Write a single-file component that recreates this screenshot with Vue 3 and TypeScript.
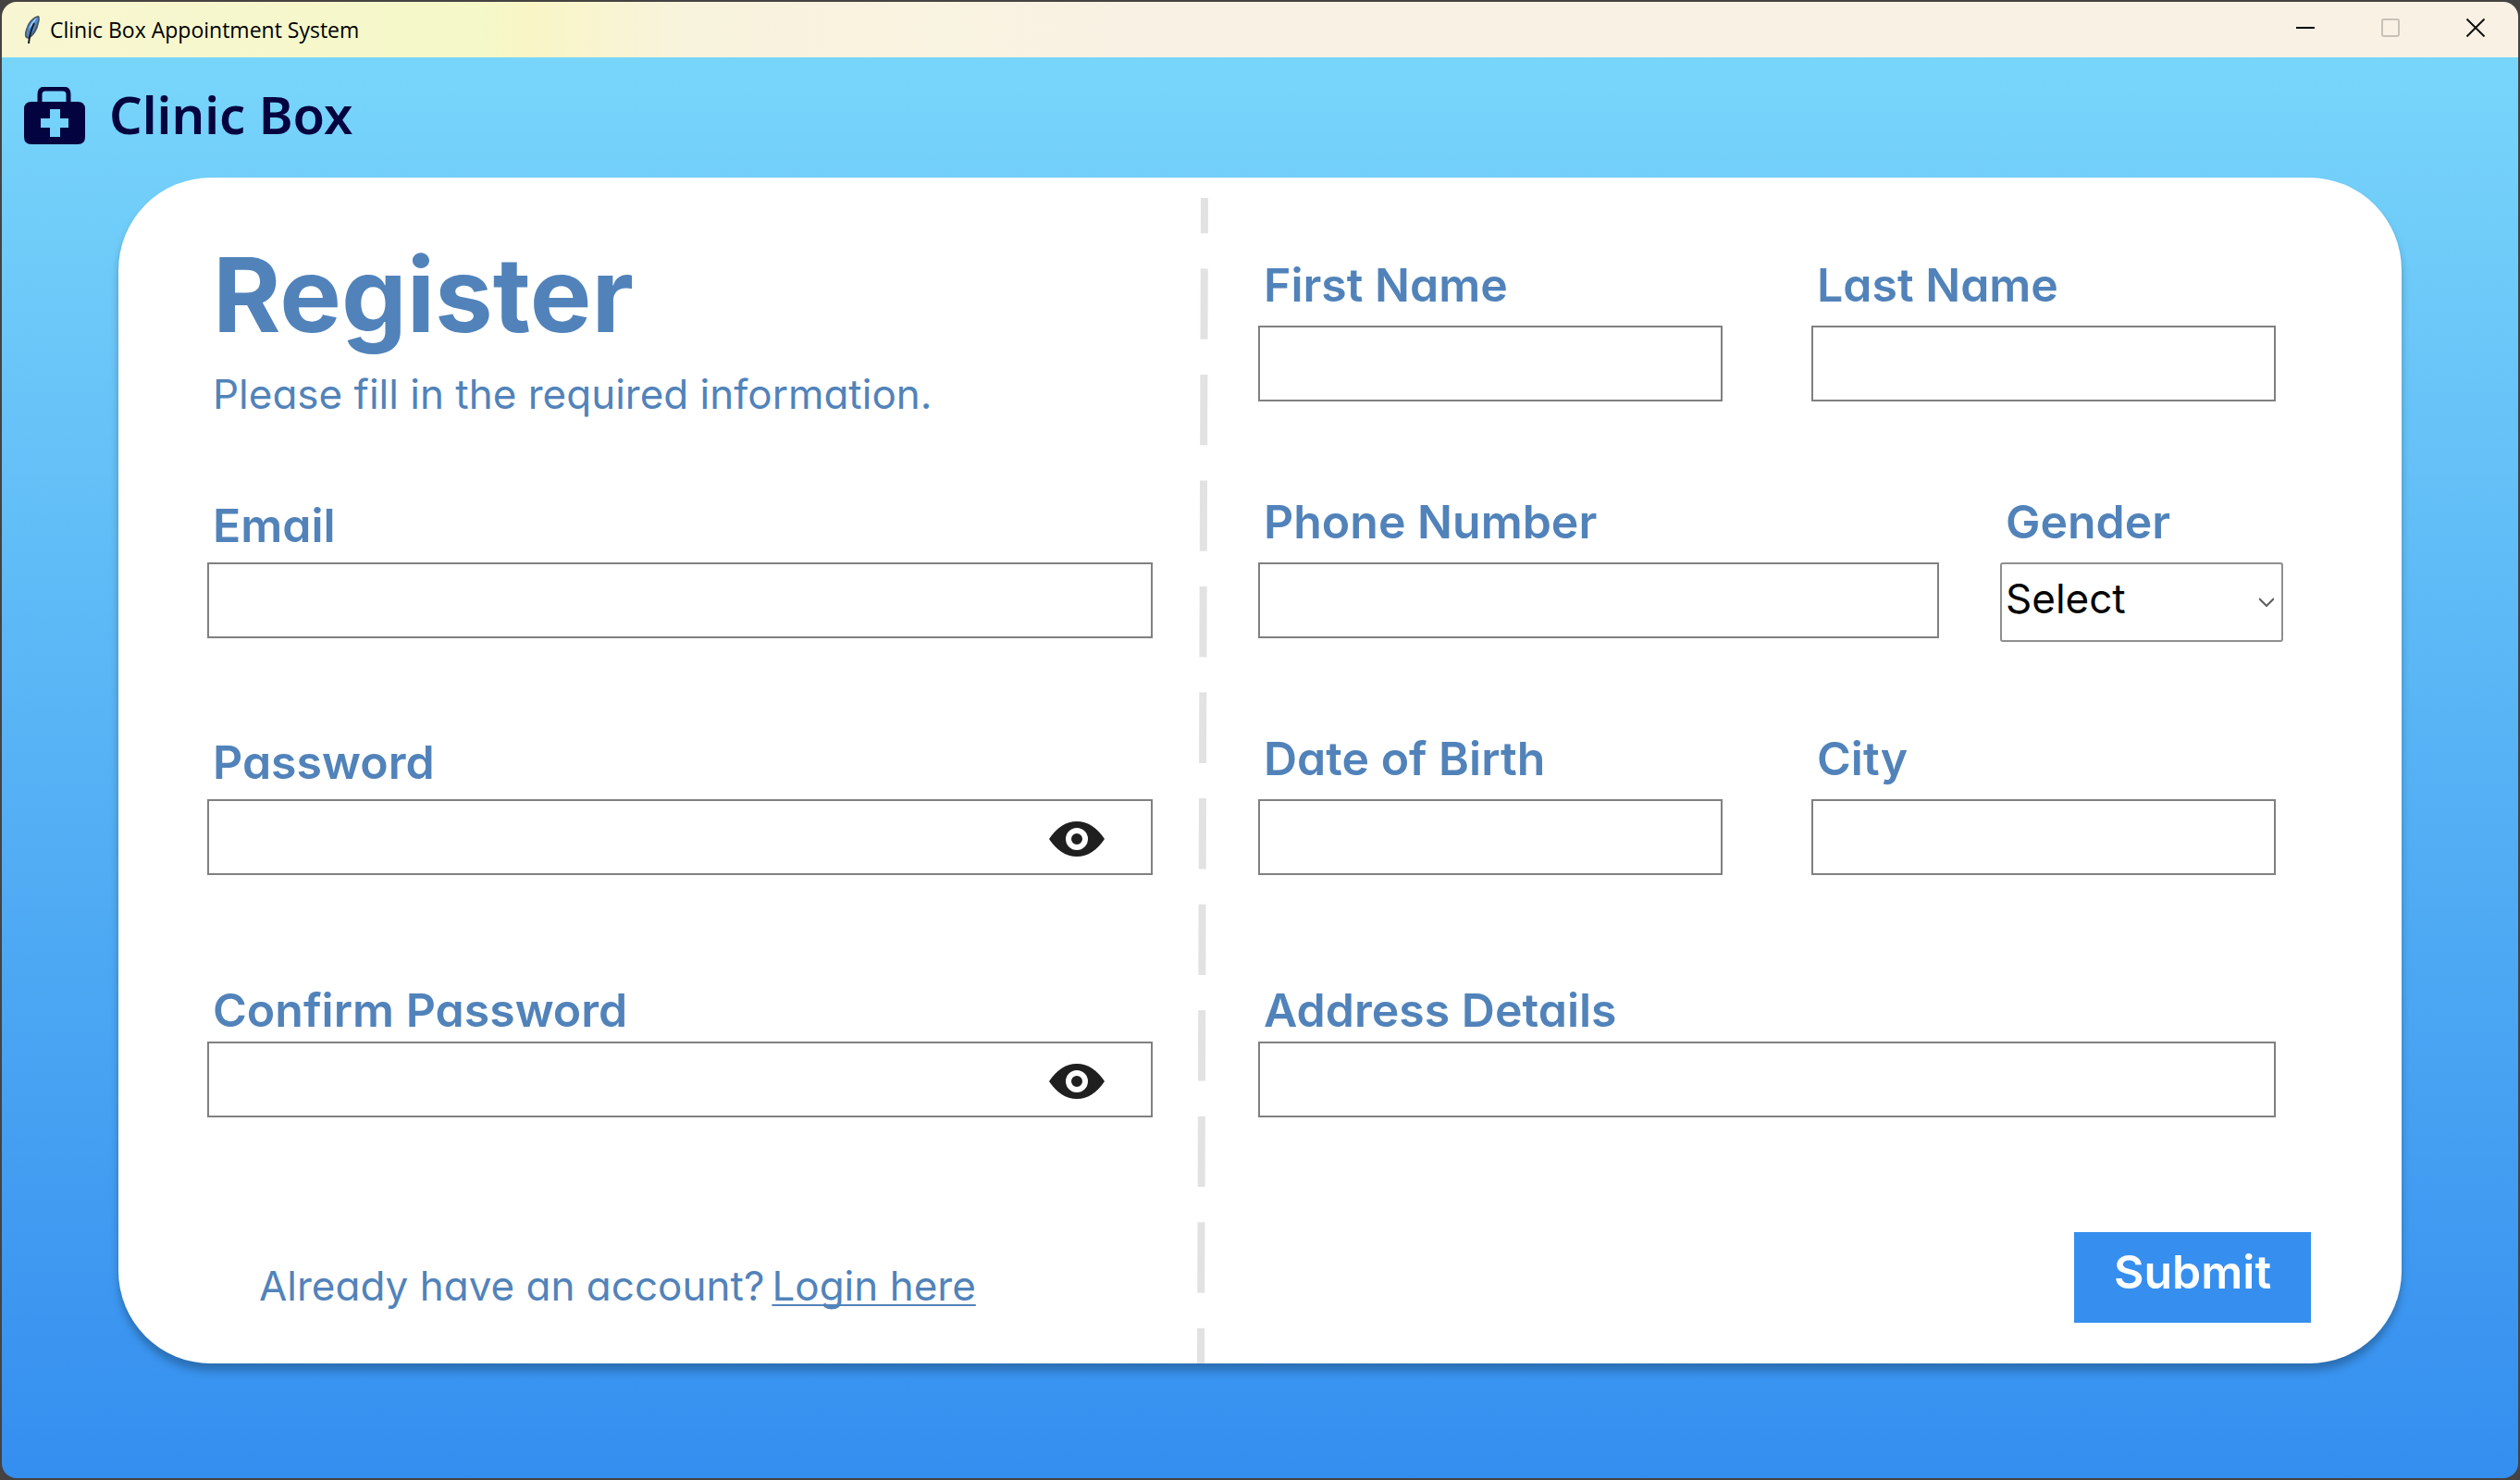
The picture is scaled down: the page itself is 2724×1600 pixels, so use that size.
<script setup lang="ts">
import { reactive, ref } from 'vue'

const form = reactive({
  email: '',
  password: '',
  confirm: '',
  firstName: '',
  lastName: '',
  phone: '',
  gender: '',
  birth: '',
  city: '',
  address: '',
})

const showPassword = ref(false)
const showConfirm = ref(false)
const genders: string[] = ['Male', 'Female', 'Other']
</script>

<template>
  <div class="desktop">
    <div class="window">
      <header class="titlebar">
        <svg class="feather" viewBox="0 0 20 32" aria-hidden="true">
          <path d="M17 1C12 1 6 7 4 13c-2 5-3 9-1 12l3 1c4-2 8-7 10-13 1-4 3-9 1-12z" fill="#4d5a63" />
          <path d="M16 3C11 4 7 9 5 14c-1 4-2 7-1 9l2 1c4-3 6-7 8-12 1-3 3-7 2-9z" fill="#4b8bd6" />
          <path d="M15 3c-4 2-7 7-9 13l4-5z" fill="#a5d0f6" />
          <path d="M12 9C9 15 7 20 6 31" fill="none" stroke="#1c1f22" stroke-width="2" />
        </svg>
        <span class="title">Clinic Box Appointment System</span>
        <div class="controls">
          <button type="button" aria-label="Minimize">
            <svg viewBox="0 0 20 20"><path d="M0 10h20" stroke="#000" stroke-width="2" /></svg>
          </button>
          <button type="button" aria-label="Maximize" disabled>
            <svg viewBox="0 0 20 20">
              <rect x="1" y="1" width="18" height="18" rx="2" fill="none" stroke="#c6c2b8" stroke-width="2" />
            </svg>
          </button>
          <button type="button" aria-label="Close">
            <svg viewBox="0 0 20 20"><path d="M0.5 0.5l19 19M19.500 0.5l-19 19" stroke="#111" stroke-width="2" /></svg>
          </button>
        </div>
      </header>

      <main class="page">
        <div class="brand">
          <svg class="bag" viewBox="0 0 66 62" aria-hidden="true">
            <path d="M17 18V8q0-6 6-6h19q6 0 6 6v10" fill="none" stroke="#03033f" stroke-width="5" />
            <path
              fill="#03033f"
              fill-rule="evenodd"
              d="M8 16h50q8 0 8 8v30q0 8-8 8H8q-8 0-8-8V24q0-8 8-8zM28 24v10H18v10h10v10h11V44h9V34h-9V24z"
            />
          </svg>
          <span class="brand-name">Clinic Box</span>
        </div>

        <form class="card" @submit.prevent>
          <section class="account">
            <h1>Register</h1>
            <p class="intro">Please fill in the required information.</p>

            <div class="field snug email">
              <label for="email">Email</label>
              <input id="email" v-model="form.email" type="email" />
            </div>

            <div class="field snug password">
              <label for="password">Password</label>
              <div class="secret">
                <input id="password" v-model="form.password" :type="showPassword ? 'text' : 'password'" />
                <button type="button" class="eye" aria-label="Show password" @click="showPassword = !showPassword">
                  <svg viewBox="0 0 60 38">
                    <path d="M0 19C8 7 18 0 30 0s22 7 30 19C52 31 42 38 30 38S8 31 0 19z" fill="#1f1f1f" />
                    <circle cx="30" cy="19" r="9" fill="#1f1f1f" stroke="#fff" stroke-width="6" />
                  </svg>
                </button>
              </div>
            </div>

            <div class="field tight">
              <label for="confirm">Confirm Password</label>
              <div class="secret">
                <input id="confirm" v-model="form.confirm" :type="showConfirm ? 'text' : 'password'" />
                <button type="button" class="eye" aria-label="Show password" @click="showConfirm = !showConfirm">
                  <svg viewBox="0 0 60 38">
                    <path d="M0 19C8 7 18 0 30 0s22 7 30 19C52 31 42 38 30 38S8 31 0 19z" fill="#1f1f1f" />
                    <circle cx="30" cy="19" r="9" fill="#1f1f1f" stroke="#fff" stroke-width="6" />
                  </svg>
                </button>
              </div>
            </div>

            <p class="login"><span>Already have an account?</span><a href="#login">Login here</a></p>
          </section>

          <div class="divider" aria-hidden="true">
            <svg width="16" height="100%">
              <line
                x1="10" y1="0" x2="6" y2="100%" pathLength="33"
                stroke="#e2e2e2" stroke-width="8" stroke-dasharray="2 1" stroke-dashoffset="1"
              />
            </svg>
          </div>

          <section class="details">
            <div class="row halves">
              <div class="field">
                <label for="first">First Name</label>
                <input id="first" v-model="form.firstName" type="text" />
              </div>
              <div class="field">
                <label for="last">Last Name</label>
                <input id="last" v-model="form.lastName" type="text" />
              </div>
            </div>

            <div class="row contact">
              <div class="field">
                <label for="phone">Phone Number</label>
                <input id="phone" v-model="form.phone" type="tel" />
              </div>
              <div class="field">
                <label for="gender">Gender</label>
                <div class="picker">
                  <select id="gender" v-model="form.gender">
                    <option value="">Select</option>
                    <option v-for="g in genders" :key="g" :value="g">{{ g }}</option>
                  </select>
                  <svg class="chevron" viewBox="0 0 16 10" aria-hidden="true">
                    <path d="M0 1l8 8 8-8" fill="none" stroke="#5c5c5c" stroke-width="2" />
                  </svg>
                </div>
              </div>
            </div>

            <div class="row halves birth">
              <div class="field">
                <label for="birth">Date of Birth</label>
                <input id="birth" v-model="form.birth" type="text" />
              </div>
              <div class="field">
                <label for="city">City</label>
                <input id="city" v-model="form.city" type="text" />
              </div>
            </div>

            <div class="row address">
              <div class="field tight">
                <label for="address">Address Details</label>
                <input id="address" v-model="form.address" type="text" />
              </div>
            </div>

            <button type="submit" class="submit">Submit</button>
          </section>
        </form>
      </main>
    </div>
  </div>
</template>

<style>
body {
  margin: 0;
}
</style>

<style scoped>
* {
  box-sizing: border-box;
}

.desktop {
  display: flex;
  min-height: 100vh;
  padding: 2px;
  background: #454242;
  font-family: Inter, 'Open Sans', sans-serif;
  /* single-storey "a" */
  font-feature-settings: 'cv11';
  color: #5183ba;
}

.window {
  display: flex;
  flex: 1;
  flex-direction: column;
  overflow: hidden;
  border-radius: 16px;
}

.titlebar {
  display: flex;
  align-items: center;
  height: 60px;
  padding: 0 0 0 23px;
  background: linear-gradient(90deg, #f8f6d2 0, #f5f8c9 16%, #f5f8c8 19%, #f9f5c6 21%, #f8f3dc 27%, #f9f2e4 45%);
}

.feather {
  width: 20px;
  height: 32px;
}

.title {
  flex: 1;
  margin-left: 9px;
  font: 23px/32px 'Open Sans', 'Noto Sans', sans-serif;
  color: #000;
}

.controls {
  display: flex;
  align-self: flex-start;
}

.controls button {
  display: flex;
  align-items: center;
  justify-content: center;
  width: 92px;
  height: 56px;
  padding: 0;
  border: 0;
  background: none;
}

.controls svg {
  width: 20px;
  height: 20px;
}

.page {
  flex: 1;
  padding: 0 126px 124px;
  background: linear-gradient(#78d5fa, #348eef);
}

.brand {
  display: flex;
  align-items: center;
  gap: 26px;
  height: 130px;
  margin-left: -102px;
  padding-bottom: 4px;
}

.bag {
  width: 66px;
  height: 62px;
}

.brand-name {
  padding-bottom: 4px;
  font: 600 56px/72px 'Noto Sans', 'Open Sans', sans-serif;
  color: #03033f;
}

.card {
  display: grid;
  grid-template-columns: 1022fr 114px 1138fr;
  padding: 0 98px 0 96px;
  border-radius: 100px;
  background: #fff;
  box-shadow: 0 8px 8px rgba(0, 0, 0, 0.25);
}

.account {
  padding-top: 66px;
}

h1 {
  margin: 0 6px 20px;
  font-size: 112px;
  font-weight: 700;
  line-height: 120px;
}

.intro {
  margin: 0 6px 86px;
  font-size: 44px;
  line-height: 56px;
}

.field {
  display: flex;
  flex: 1;
  flex-direction: column;
  gap: 16px;
}

.field.snug {
  gap: 12px;
}

.field.tight {
  gap: 6px;
}

.email {
  margin-bottom: 106px;
}

.password {
  margin-bottom: 118px;
}

label {
  padding-left: 6px;
  font-size: 50px;
  font-weight: 600;
  line-height: 56px;
  white-space: nowrap;
}

input {
  width: 100%;
  height: 82px;
  padding: 0 8px;
  border: 2px solid #808080;
  border-radius: 0;
  background: #fff;
  font: inherit;
  font-size: 44px;
  color: #000;
}

.secret,
.picker {
  position: relative;
}

.secret input {
  display: block;
  padding-right: 120px;
}

.eye {
  position: absolute;
  top: 24px;
  right: 52px;
  width: 60px;
  height: 38px;
  padding: 0;
  border: 0;
  background: none;
}

.eye svg {
  display: block;
}

.login {
  display: flex;
  gap: 8px;
  margin: 154px 0 0 56px;
  font-size: 44px;
  line-height: 56px;
  white-space: nowrap;
}

.login a {
  color: inherit;
  text-decoration-thickness: 2px;
  text-decoration-skip-ink: none;
  text-underline-offset: 4px;
}

.divider {
  display: flex;
  padding: 22px 0 0 46px;
}

.details {
  display: flex;
  flex-direction: column;
  padding: 88px 0 44px;
}

.row {
  display: flex;
  margin: 0 38px 102px 0;
}

.halves {
  gap: 96px;
}

.contact {
  display: grid;
  grid-template-columns: 736fr 306fr;
  gap: 66px;
  margin: 0 30px 98px 0;
}

.birth {
  margin-bottom: 118px;
}

.address {
  margin-bottom: 124px;
}

select {
  display: block;
  width: 100%;
  height: 86px;
  padding: 0 40px 8px 4px;
  border: 2px solid #8f8f8f;
  border-radius: 3px;
  appearance: none;
  background: #fff;
  font: inherit;
  font-size: 44px;
  color: #000;
}

.chevron {
  position: absolute;
  top: 38px;
  right: 10px;
  width: 16px;
  height: 10px;
  pointer-events: none;
}

.submit {
  align-self: flex-end;
  width: 256px;
  height: 98px;
  padding: 0 0 12px;
  border: 0;
  background: #368fef;
  font: inherit;
  font-size: 50px;
  font-weight: 600;
  color: #fff;
}
</style>
